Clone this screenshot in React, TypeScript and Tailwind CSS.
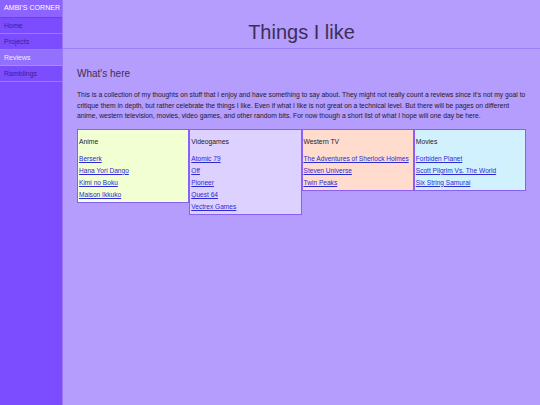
import React from 'react';

interface Category {
  title: string;
  bg: string;
  items: string[];
}

const categories: Category[] = [
  {
    title: 'Anime',
    bg: 'bg-[#f1ffd2]',
    items: ['Berserk', 'Hana Yori Dango', 'Kimi no Boku', 'Maison Ikkuko'],
  },
  {
    title: 'Videogames',
    bg: 'bg-[#ddd1ff]',
    items: ['Atomic 79', 'Off', 'Pioneer', 'Quest 64', 'Vectrex Games'],
  },
  {
    title: 'Western TV',
    bg: 'bg-[#ffdccd]',
    items: ['The Adventures of Sherlock Holmes', 'Steven Universe', 'Twin Peaks'],
  },
  {
    title: 'Movies',
    bg: 'bg-[#d2f1ff]',
    items: ['Forbiden Planet', 'Scott Pilgrim Vs. The World', 'Six String Samurai'],
  },
];

const nav = ['Home', 'Projects', 'Reviews', 'Ramblings'];

export default function App() {
  return (
    <div className="flex h-[405px] w-[540px] overflow-hidden font-['Liberation_Sans',Arial,sans-serif]">
      {/* Sidebar */}
      <aside className="w-[63px] shrink-0 bg-[#7c4dff] border-r border-[#9a78f5]">
        <div className="h-[18px] bg-[#8c63ff] border-b border-[#6a3df0] text-white text-[7.1px] leading-[17px] pl-[4px] whitespace-nowrap">
          AMBI'S CORNER
        </div>
        {nav.map((item) => (
          <div
            key={item}
            className={
              item === 'Reviews'
                ? 'h-[16px] bg-[#9470ff] border-b border-[#a68bff] text-[#efe8ff] text-[7px] leading-[15px] pl-[4px]'
                : 'h-[16px] bg-[#7c4dff] border-b border-[#9a78ff] text-[#3f1f8f] text-[7px] leading-[15px] pl-[4px]'
            }
          >
            {item}
          </div>
        ))}
      </aside>

      {/* Main */}
      <main className="flex-1 bg-[#b49dfd]">
        <header className="h-[49px] border-b border-[#9e7ff8] flex items-end justify-center pb-[4px]">
          <h1 className="text-[20px] leading-[24px] text-[#3c2f55]">Things I like</h1>
        </header>

        <section className="px-[14px]">
          <h2 className="mt-[18px] text-[10px] leading-[14px] text-[#3c2f55]">What's here</h2>
          <p className="mt-[9px] text-[6.75px] leading-[10.6px] text-[#1e1a2a]">
            This is a collection of my thoughts on stuff that I enjoy and have something to say about. They might not
            really count a reviews since it's not my goal to critique them in depth, but rather celebrate the things I
            like. Even if what I like is not great on a technical level. But there will be pages on different anime,
            western television, movies, video games, and other random bits. For now though a short list of what I hope
            will one day be here.
          </p>

          <div className="mt-[7px] grid grid-cols-4 items-start">
            {categories.map((cat) => (
              <div key={cat.title} className={`${cat.bg} border border-[#8a5ff8] px-px pb-px`}>
                <p className="mt-[6px] mb-[5px] text-[6.8px] leading-[12px] text-[#1e1a2a]">{cat.title}</p>
                <ul>
                  {cat.items.map((it) => (
                    <li key={it} className="text-[6.6px] leading-[12px] whitespace-nowrap">
                      <a href="#" className="text-[#2c2bd4] underline">
                        {it}
                      </a>
                    </li>
                  ))}
                </ul>
              </div>
            ))}
          </div>
        </section>
      </main>
    </div>
  );
}
